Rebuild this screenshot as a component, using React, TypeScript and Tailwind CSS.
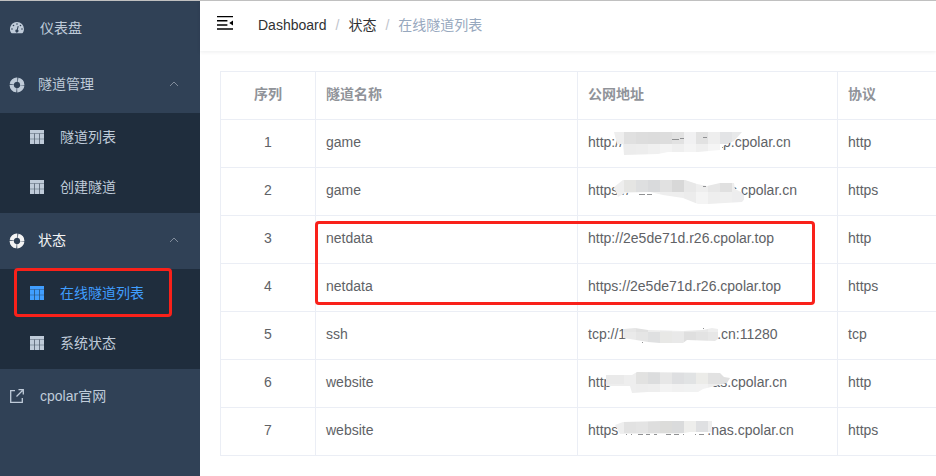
import React, { useState } from 'react';
import { clsx } from 'clsx';

interface Mask {
  outline: string;
  split: number;
  top: string[];
  bottom: string[];
  specks?: [number, number, number][];
}

interface Tunnel {
  name: string;
  url: string;
  tail?: string;
  gap?: string;
  protocol: string;
  mask?: Mask;
}

const tunnels: Tunnel[] = [
  {
    name: 'game',
    url: 'http://',
    gap: 'w-[100px]',
    tail: 'p.cpolar.cn',
    protocol: 'http',
    mask: {
      outline: '26,2 154,2 146,11 135,16 132,20 110,22 80,22 70,24 36,25 35,14 29,14',
      split: 14,
      top: ['#eeeeee', '#e0e0e0', '#dddddd', '#dcdcdc', '#dddddd', '#e2e2e2', '#f1f1f2', '#e2e2e2', '#eeeeee', '#e3e4e6', '#e8e9ea'],
      bottom: ['#efefef', '#ececec', '#ededed', '#f0f0f0', '#f3f3f3', '#efefef', '#f4f4f4', '#efefef', '#f5f5f5', '#ffffff', '#ffffff'],
      specks: [[84, 9, 7], [92, 8, 4], [115, 7, 4], [134, 17, 1]],
    },
  },
  {
    name: 'game',
    url: 'https://',
    gap: 'w-[100px]',
    tail: 's.cpolar.cn',
    protocol: 'https',
    mask: {
      outline: '26,9 35,2 97,2 109,6 119,8 132,5 146,5 147,11 153,14 158,19 154,24 120,26 110,26 95,20 75,17 62,14 37,15 30,19',
      split: 14,
      top: ['#eeeeee', '#e5e5e3', '#dedfe0', '#d9dadc', '#e1e1e1', '#d8d8d8', '#e8e8e8', '#eeeeee', '#e7e7e7', '#e0e0e0', '#eeeeee'],
      bottom: ['#f0f0f0', '#f3f3f3', '#f1f1f1', '#f1f1f1', '#eeeeee', '#eeeeee', '#ececec', '#f4f4f4', '#eeeeee', '#efefef', '#ededee'],
      specks: [[51, 16, 6], [59, 16, 5], [115, 8, 3]],
    },
  },
  { name: 'netdata', url: 'http://2e5de71d.r26.cpolar.top', protocol: 'http' },
  { name: 'netdata', url: 'https://2e5de71d.r26.cpolar.top', protocol: 'https' },
  {
    name: 'ssh',
    url: 'tcp://1',
    gap: 'w-[91px]',
    tail: '.cn:11280',
    protocol: 'tcp',
    mask: {
      outline: '36,7 47,6 60,8 95,9 115,8 124,6 130,7 130,17 127,19 99,18 95,21 72,21 60,20 42,17 35,16',
      split: 10,
      top: ['#eeeeee', '#e6e6e6', '#e0e0e0', '#ededed', '#eaeaea', '#eeeeee', '#e9e9e9', '#e8e8e8', '#eeeeee', '#eeeeee', '#eeeeee'],
      bottom: ['#eeeeee', '#eaeaea', '#e5e5e5', '#dfe0e1', '#e8e8e6', '#e9e9e9', '#dfdfdf', '#e3e3e3', '#e7e7e7', '#efefef', '#eeeeee'],
      specks: [[54, 20, 1], [115, 6, 1]],
    },
  },
  {
    name: 'website',
    url: 'http',
    gap: 'w-[101px]',
    tail: 'as.cpolar.cn',
    protocol: 'http',
    mask: {
      outline: '18,5 44,5 49,2 132,3 136,7 142,8 139,13 115,19 110,22 60,22 44,23 42,16 18,16',
      split: 14,
      top: ['#eaeaea', '#eeeeee', '#e2e2e1', '#dcddde', '#e7e7e7', '#dedfe1', '#e1e3e4', '#ecece9', '#e2e2e2', '#e0e0e0', '#eeeeee'],
      bottom: ['#eeeeee', '#eeeeee', '#ededed', '#eeeeee', '#f3f3f3', '#f1f1f1', '#f1f2f2', '#f2f2f2', '#eeeeee', '#f2f2f2', '#eeeeee'],
    },
  },
  {
    name: 'website',
    url: 'https',
    gap: 'w-[89px]',
    tail: '.nas.cpolar.cn',
    protocol: 'https',
    mask: {
      outline: '27,7 35,4 75,3 124,3 124,14 102,14 90,16 62,16 32,16',
      split: 15,
      top: ['#eeeeee', '#e2e2e2', '#e4e4e4', '#dedede', '#dcdcda', '#dadbdc', '#eeeeec', '#dfe0e2', '#eeeeee', '#eeeeee', '#eeeeee'],
      bottom: ['#f0f0f0', '#f2f2f2', '#f2f2f2', '#f4f4f4', '#f4f4f4', '#f4f4f4', '#ffffff', '#ffffff', '#ffffff', '#ffffff', '#ffffff'],
      specks: [[38, 16, 1], [43, 16, 1], [50, 16, 5], [58, 16, 4], [66, 16, 3], [78, 16, 5], [86, 16, 5], [95, 16, 1], [107, 16, 1], [111, 16, 5]],
    },
  },
];

function DashboardIcon() {
  return (
    <svg viewBox="0 0 14 12" className="w-3.5 h-3 shrink-0" fill="currentColor" aria-hidden="true">
      <path
        fillRule="evenodd"
        d="M7 0a7 7 0 0 1 7 7c0 1.400-.4 2.700-1.100 3.800-.2.300-.4.400-.7.400H1.800c-.3 0-.5-.1-.7-.4A7 7 0 0 1 7 0ZM2 6.200a.8.8 0 1 0 0 1.600.8.8 0 0 0 0-1.600Zm1.500-3.500a.8.8 0 1 0 0 1.600.8.8 0 0 0 0-1.600ZM7 1.200a.8.8 0 1 0 0 1.600.8.8 0 0 0 0-1.600Zm3.500 1.500a.8.8 0 1 0 0 1.600.8.8 0 0 0 0-1.600ZM12 6.200a.8.8 0 1 0 0 1.600.8.8 0 0 0 0-1.600ZM7.700 4l-.9 3.500a1.500 1.500 0 1 0 1 .3L8.700 4.300Z"
      />
    </svg>
  );
}

function RingIcon() {
  return (
    <svg viewBox="0 -2 16 18" className="w-4 h-[18px] shrink-0" fill="none" stroke="currentColor" aria-hidden="true">
      <circle cx="8" cy="8" r="5.300" strokeWidth="4.200" strokeDasharray="7.325 1" strokeDashoffset="-0.500" />
      <circle cx="8" cy="8" r="5.300" strokeWidth="4.200" strokeOpacity="0.250" />
    </svg>
  );
}

function TableIcon() {
  return (
    <svg viewBox="0 0 128 128" className="w-3.5 h-3.5 shrink-0" fill="currentColor" aria-hidden="true">
      <path d="M0 0h128v128H0z" fillOpacity="0.300" />
      <path d="M0 0h128v29H0zM0 34h37v47H0zM0 85h37v43H0zM44 34h40v47H44zM44 85h40v43H44zM91 34h37v47H91zM91 85h37v43H91z" />
    </svg>
  );
}

function LinkIcon() {
  return (
    <svg viewBox="0 0 14 14" className="w-3.5 h-3.5 shrink-0" fill="none" stroke="currentColor" strokeWidth="1.300" aria-hidden="true">
      <path d="M5 1.700H.7v11.600h11.600V9M6.500 7.500l6-6M8.500.7h4.800v4.800" />
    </svg>
  );
}

function FoldIcon() {
  return (
    <svg viewBox="0 0 16 14" className="w-4 h-3.5" fill="currentColor" aria-hidden="true">
      <path d="M0 0h16v1.300H0zM0 4.100h10.400v1.500H0zM0 8.200h10.400v1.500H0zM0 12.300h16v1.500H0zM16 4.600v4.800L12.200 7z" />
    </svg>
  );
}

function Chevron({ open }: { open: boolean }) {
  return (
    <svg viewBox="0 0 10 6" className={clsx('w-2.5 h-1.5 ml-auto text-[#8a95a3]', !open && 'rotate-180')} fill="none" stroke="currentColor" strokeWidth="0.900" aria-hidden="true">
      <path d="M1 5l4-4 4 4" />
    </svg>
  );
}

interface SubMenuProps {
  title: string;
  active?: boolean;
  items: string[];
}

function SubMenu({ title, active, items }: SubMenuProps) {
  const [open, setOpen] = useState(true);

  return (
    <li>
      <button
        onClick={() => setOpen(!open)}
        aria-expanded={open}
        className={clsx('flex w-full h-14 items-center pl-[9px] pr-[21px] pb-0.5', active && 'text-[#f4f4f5]')}
      >
        <RingIcon />
        <span className="ml-[13px]">{title}</span>
        <Chevron open={open} />
      </button>
      {open && (
        <ul className="bg-[#1f2d3d]">
          {items.map((item) => {
            const current = item === '在线隧道列表';
            return (
              <li key={item} className="relative">
                <a
                  href="#"
                  aria-current={current ? 'page' : undefined}
                  className={clsx('flex h-[50px] items-center gap-4 pl-[30px] pb-0.5', current && 'text-[#409eff]')}
                >
                  <TableIcon />
                  {item}
                </a>
                {current && (
                  <div className="absolute left-3.5 right-7 -top-px h-[49px] rounded border-3 border-[#f9211a] pointer-events-none" />
                )}
              </li>
            );
          })}
        </ul>
      )}
    </li>
  );
}

function Mosaic({ mask }: { mask: Mask }) {
  const id = React.useId();

  return (
    <svg viewBox="0 -4 160 32" className="absolute left-0 top-1/2 -translate-y-1/2 w-40 h-8" shapeRendering="crispEdges" aria-hidden="true">
      <clipPath id={id}>
        <polygon points={mask.outline} />
      </clipPath>
      <g clipPath={`url(#${id})`}>
        {mask.top.map((fill, i) => (
          <rect key={i} x={i === 0 ? 0 : 24 + i * 12} y="0" width={i === 0 ? 36 : 12} height={mask.split} fill={fill} />
        ))}
        {mask.bottom.map((fill, i) => (
          <rect key={i} x={i === 0 ? 0 : 24 + i * 12} y={mask.split} width={i === 0 ? 36 : 12} height="14" fill={fill} />
        ))}
      </g>
      {mask.specks?.map(([x, y, width]) => (
        <rect key={x} x={x} y={y} width={width} height="1" fill="#909193" />
      ))}
    </svg>
  );
}

export default function App() {
  return (
    <div className="flex min-h-screen border-t border-[#c0c0c0] bg-white text-sm font-['Liberation_Sans','Noto_Sans_CJK_SC',sans-serif] overflow-hidden">
      <nav className="w-[200px] shrink-0 bg-[#304156] text-[#bfcbd9]">
        <ul>
          <li>
            <a href="#" className="flex h-14 items-center gap-4 pl-2.5 pb-0.5">
              <DashboardIcon />
              仪表盘
            </a>
          </li>
          <SubMenu title="隧道管理" items={['隧道列表', '创建隧道']} />
          <SubMenu title="状态" active items={['在线隧道列表', '系统状态']} />
          <li>
            <a href="#" className="flex h-14 items-center gap-4 pl-2.5 pb-0.5">
              <LinkIcon />
              cpolar官网
            </a>
          </li>
        </ul>
      </nav>

      <main className="flex-1 min-w-0">
        <header className="flex h-[50px] items-center shadow-[0_1px_4px_rgba(0,21,41,0.08)]">
          <button aria-label="收起菜单" className="pl-[17px] pr-[25px] pb-1.5">
            <FoldIcon />
          </button>
          <ol className="flex items-center gap-[9px] pb-0.5 text-[#303133]">
            <li><a href="#">Dashboard</a></li>
            <li className="text-[#c0c4cc]">/</li>
            <li><a href="#">状态</a></li>
            <li className="text-[#c0c4cc]">/</li>
            <li className="text-[#97a8be]">在线隧道列表</li>
          </ol>
        </header>

        <div className="relative mt-5 ml-5">
          <table className="w-full table-fixed border-separate border-spacing-0 border-t border-l border-[#ebeef5] text-left text-[#606266]">
            <thead>
              <tr className="h-12 text-[#909399] *:border-b *:border-[#ebeef5] *:px-2.5 *:pb-1">
                <th className="w-[95px] border-r text-center">序列</th>
                <th className="w-[262px] border-r">隧道名称</th>
                <th className="w-[260px] border-r">公网地址</th>
                <th>协议</th>
              </tr>
            </thead>
            <tbody>
              {tunnels.map((tunnel, idx) => (
                <tr key={idx} className="h-12 *:border-b *:border-[#ebeef5] *:px-2.5 *:pb-1">
                  <td className="border-r text-center">{idx + 1}</td>
                  <td className="border-r">{tunnel.name}</td>
                  <td className="border-r">
                    <div className="relative flex">
                      <span>{tunnel.url}</span>
                      {tunnel.gap && <span className={clsx('shrink-0', tunnel.gap)} />}
                      <span>{tunnel.tail}</span>
                      {tunnel.mask && <Mosaic mask={tunnel.mask} />}
                    </div>
                  </td>
                  <td>{tunnel.protocol}</td>
                </tr>
              ))}
            </tbody>
          </table>
          <div className="absolute left-[95px] top-[150px] w-[500px] h-[84px] rounded border-3 border-[#f9211a] pointer-events-none" />
        </div>
      </main>
    </div>
  );
}
